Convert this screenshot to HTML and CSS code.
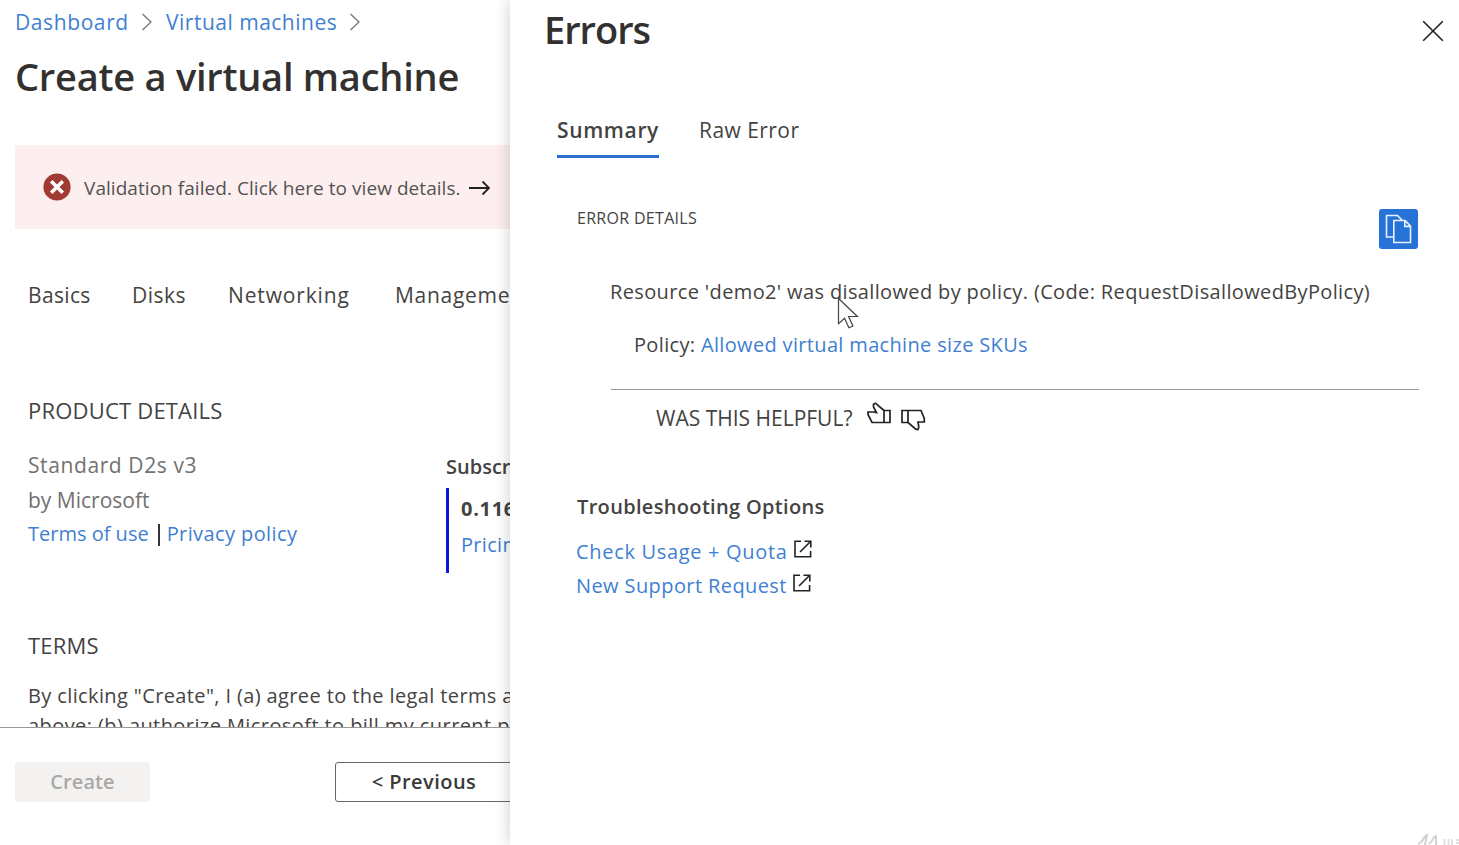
FILE: index.html
```html
<!DOCTYPE html>
<html lang="en">
<head>
<meta charset="utf-8">
<title>Create a virtual machine</title>
<link rel="stylesheet" href="styles.css">
</head>
<body>
<div class="app">
  <main class="page">
    <div class="content">
      <nav class="crumbs">
        <a class="crumb-dash">Dashboard</a>
        <svg class="chev" width="12" height="18" viewBox="0 0 12 18"><path d="M1.5 1l8.500 8-8.500 8" /></svg>
        <a class="crumb-vm">Virtual machines</a>
        <svg class="chev" width="12" height="18" viewBox="0 0 12 18"><path d="M1.5 1l8.500 8-8.500 8" /></svg>
      </nav>
      <h1 class="title">Create a virtual machine</h1>
      <div class="banner">
        <svg class="fail" width="28" height="28" viewBox="0 0 28 28"><circle cx="14" cy="14" r="13.600" fill="#a13a33"/><path d="M8.200 8.200l11.600 11.600M19.800 8.200L8.200 19.800" stroke="#fff" stroke-width="3.600"/></svg>
        <span class="banner-text">Validation failed. Click here to view details.</span>
        <svg class="arrow" width="22" height="16" viewBox="0 0 22 16"><path d="M0 8h20M13.500 1.500L20 8l-6.500 6.500" /></svg>
      </div>
      <div class="steps">
        <span class="step-basics">Basics</span>
        <span class="step-disks">Disks</span>
        <span class="step-net">Networking</span>
        <span class="step-mgmt">Manageme</span>
      </div>
      <h2 class="section product-head">PRODUCT DETAILS</h2>
      <div class="product">
        <div class="offer">
          <div class="sku">Standard D2s v3</div>
          <div class="vendor">by Microsoft</div>
          <div class="legal"><a>Terms of use</a><span class="sep"></span><a class="privacy">Privacy policy</a></div>
        </div>
        <div class="credits">
          <div class="credits-head">Subscr</div>
          <div class="price-box">
            <div class="price">0.116</div>
            <a class="pricing">Pricin</a>
          </div>
        </div>
      </div>
      <h2 class="section terms-head">TERMS</h2>
      <div class="terms"><div class="terms-one">By clicking "Create", I (a) agree to the legal terms a</div><div class="terms-two">above; (b) authorize Microsoft to bill my current p</div></div>
    </div>
    <footer class="footer">
      <button class="btn create">Create</button>
      <button class="btn previous">&lt; Previous</button>
    </footer>
  </main>
  <aside class="panel">
    <header class="panel-head">
      <h1 class="panel-title">Errors</h1>
      <svg class="close" width="22" height="22" viewBox="0 0 22 22"><path d="M1.200 1.200l19.600 19.600M20.800 1.200L1.200 20.800" /></svg>
    </header>
    <div class="tabs">
      <span class="tab active">Summary</span>
      <span class="tab raw">Raw Error</span>
    </div>
    <div class="details-row">
      <h3 class="details-head">ERROR DETAILS</h3>
      <span class="copy"><svg width="27" height="30" viewBox="0 0 27 30"><path d="M8 23H1.500V1.500h11l4.500 4.500M8.800 6.500h11.400l5.300 5.600v16.400H8.800zM19.800 6.800v5.600h5.500" /></svg></span>
    </div>
    <div class="error">
      <p class="message">Resource 'demo2' was disallowed by policy. (Code: RequestDisallowedByPolicy)</p>
      <p class="policy">Policy: <a>Allowed virtual machine size SKUs</a></p>
      <div class="helpful">
        <span class="helpful-text">WAS THIS HELPFUL?</span>
        <svg class="thumb" width="26" height="24" viewBox="0 0 26 24"><path d="M18 8.500h6v12h-6zM18 20.500H6L2 12.500V10H7.500L10.500 10.500 7.500 5V2.200L9.500 1.200 18 8.500" /></svg>
        <svg class="thumb down" width="26" height="24" viewBox="0 0 26 24"><path d="M2 2.500h6v12H2zM8 2.500h13L24.300 10.500v3.500H18l.8 5-.8 2.600-2.200-.4L8 14.500" /></svg>
      </div>
    </div>
    <h3 class="trouble-head">Troubleshooting Options</h3>
    <div class="links">
      <div class="link"><a class="quota">Check Usage + Quota</a><svg class="ext" width="18" height="18" viewBox="0 0 18 18"><path d="M7 1.200H1v15.600h15.600V11M10.500 1.200h6.300v6.300M16.500 1.500L6 12" /></svg></div>
      <div class="link"><a class="support">New Support Request</a><svg class="ext" width="18" height="18" viewBox="0 0 18 18"><path d="M7 1.200H1v15.600h15.600V11M10.500 1.200h6.300v6.300M16.500 1.500L6 12" /></svg></div>
    </div>
    <svg class="pointer" width="24" height="34" viewBox="0 0 24 34"><path d="M1.500 1.500v25.200l6.100-5.500 4.300 9.500 4-1.700-4.300-9.500h8.800z" /></svg>
    <svg class="mark" width="42" height="12" viewBox="0 0 42 12"><path class="mark-wave" d="M1 11q4-1 7-8l2-1-2 10M12 11q3-2 5-7l2-1v9" /><path d="M27.500 6v6M31.500 6v6M35 6v6M39 7h3M39 10h3" /></svg>
  </aside>
</div>
</body>
</html>
```

FILE: styles.css
```css
* { box-sizing: border-box; }
body { margin: 0; font-family: "Open Sans", "Noto Sans", sans-serif; font-size: 20px; line-height: 30px; color: #444342; background: #fff; }
h1, h2, h3, p { margin: 0; font-weight: 400; }
a { color: #3f7fd2; }
svg { display: block; flex: none; fill: none; }
.app { display: flex; width: 1459px; height: 845px; overflow: hidden; }

.page { width: 510px; height: 845px; flex: none; display: flex; flex-direction: column; overflow: hidden; white-space: nowrap; }
.content { height: 727px; flex: none; overflow: hidden; }
.crumbs { display: flex; align-items: center; padding: 7px 0 0 15px; font-size: 21px; }
.crumb-dash { width: 126px; letter-spacing: .6px; }
.crumb-vm { width: 183px; margin-left: 13px; letter-spacing: .5px; }
.chev { stroke: #777; stroke-width: 1.3; }
.title { margin-top: 13px; padding-left: 15px; font-size: 38px; line-height: 52px; font-weight: 600; letter-spacing: -.25px; color: #323130; }
.banner { display: flex; align-items: center; height: 84px; margin: 43px 0 0 15px; padding-left: 28px; background: #fdeff0; font-size: 19px; }
.banner-text { width: 383px; margin: 2px 0 0 13px; letter-spacing: .05px; color: #545352; }
.arrow { stroke: #222; stroke-width: 1.8; margin: 2px 0 0 2px; }
.steps { display: flex; margin-top: 51px; padding-left: 28px; font-size: 21px; }
.steps span { flex: none; }
.step-basics { width: 104px; letter-spacing: .35px; }
.step-disks { width: 96px; letter-spacing: .5px; }
.step-net { width: 167px; letter-spacing: .85px; }
.step-mgmt { letter-spacing: .7px; }
.section { padding-left: 28px; font-size: 22px; letter-spacing: .2px; }
.product-head { margin-top: 85px; }
.product { display: flex; margin-top: 25px; }
.offer { width: 446px; padding-left: 28px; flex: none; font-size: 21px; color: #727170; }
.sku { letter-spacing: .6px; }
.vendor { margin-top: 5px; }
.legal { display: flex; align-items: center; margin-top: 4px; font-size: 20px; }
.sep { width: 2px; height: 22px; margin: 2px 7px 0 9px; background: #333; }
.privacy { letter-spacing: .4px; }
.credits { width: 64px; overflow: hidden; padding-top: 2px; }
.credits-head { font-weight: 600; }
.price-box { height: 85px; margin-top: 6px; padding: 6px 0 0 12px; border-left: 3px solid #0f15e0; }
.price { font-weight: 700; letter-spacing: .7px; line-height: 30px; }
.pricing { display: block; margin-top: 6px; letter-spacing: .3px; }
.terms-head { margin-top: 57px; }
.terms { padding: 21px 0 0 28px; }
.terms-one { letter-spacing: .38px; }
.terms-two { letter-spacing: .42px; }
.footer { display: flex; align-items: flex-start; height: 118px; padding: 34px 0 0 15px; border-top: 1px solid #999; }
.btn { height: 40px; flex: none; border-radius: 3px; font: 600 20px/30px "Open Sans", sans-serif; padding: 0; }
.create { width: 135px; border: 0; background: #f3f2f1; color: #a9a8a6; letter-spacing: .1px; }
.previous { width: 178px; margin-left: 185px; border: 1.5px solid #666; background: #fff; color: #3a3938; letter-spacing: .45px; }

.panel { position: relative; flex: 1; height: 845px; background: #fff; box-shadow: 0 0 16px rgba(0, 0, 0, .2); }
.panel-head { display: flex; justify-content: space-between; align-items: flex-start; padding: 3px 15px 0 34px; }
.panel-title { font-size: 38px; line-height: 52px; font-weight: 600; letter-spacing: -1px; color: #323130; }
.close { margin-top: 17px; stroke: #222; stroke-width: 1.6; }
.tabs { display: flex; gap: 40px; padding: 60px 0 0 47px; font-size: 21px; }
.tab { height: 43px; letter-spacing: .45px; }
.active { width: 102px; font-weight: 600; letter-spacing: .65px; border-bottom: 3px solid #2b72ce; }
.details-row { display: flex; justify-content: space-between; align-items: flex-start; padding: 45px 41px 0 67px; }
.details-head { font-size: 16px; font-weight: 500; letter-spacing: .3px; }
.copy { display: flex; align-items: center; justify-content: center; width: 39px; height: 40px; margin-top: 6px; border-radius: 3px; background: #2672d6; }
.copy svg { stroke: #e8f2ff; stroke-width: 1.6; }
.error { padding: 28px 40px 0 101px; }
.message { margin-left: -1px; letter-spacing: .36px; white-space: nowrap; }
.policy { margin-top: 23px; padding: 0 0 29px 23px; letter-spacing: .34px; border-bottom: 1px solid #999; }
.helpful { display: flex; padding: 13px 0 0 45px; font-size: 21px; }
.helpful-text { width: 210px; }
.thumb { margin-top: -1px; stroke: #222; stroke-width: 1.7; }
.down { margin: 5px 0 0 8px; }
.trouble-head { margin: 59px 0 0 67px; font-size: 20px; font-weight: 600; letter-spacing: .33px; }
.links { margin: 15px 0 0 66px; }
.link { display: flex; height: 34px; }
.ext { margin: 3px 0 0 6px; stroke: #222; stroke-width: 1.6; }
.quota { letter-spacing: .68px; }
.support { letter-spacing: .4px; }
.pointer { position: absolute; left: 327px; top: 297px; fill: #fff; stroke: #444; stroke-width: 1.2; }
.mark { position: absolute; right: 0; bottom: 0; stroke: #dedede; stroke-width: 1.8; }
.mark-wave { stroke: #d2d2d2; stroke-width: 2; }
```
